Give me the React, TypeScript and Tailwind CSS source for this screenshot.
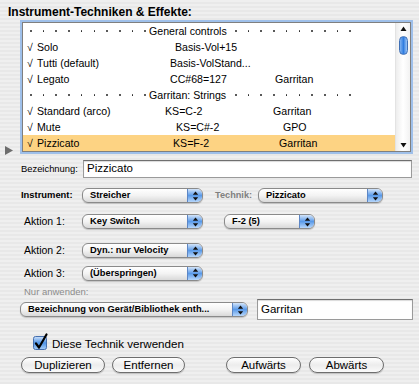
import React from "react";

type Row =
  | { kind: "sep"; label: string }
  | {
      kind: "item";
      name: string;
      action: string;
      actionPad: string;
      lib?: string;
      libPad?: string;
      selected?: boolean;
    };

const rows: Row[] = [
  { kind: "sep", label: "General controls" },
  { kind: "item", name: "Solo", action: "Basis-Vol+15", actionPad: "pl-[10px]" },
  { kind: "item", name: "Tutti (default)", action: "Basis-VolStand...", actionPad: "pl-[5px]" },
  { kind: "item", name: "Legato", action: "CC#68=127", actionPad: "pl-[5px]", lib: "Garritan", libPad: "pl-[2px]" },
  { kind: "sep", label: "Garritan: Strings" },
  { kind: "item", name: "Standard (arco)", action: "KS=C-2", actionPad: "pl-0", lib: "Garritan", libPad: "pl-0" },
  { kind: "item", name: "Mute", action: "KS=C#-2", actionPad: "pl-[11px]", lib: "GPO", libPad: "pl-[10px]" },
  {
    kind: "item",
    name: "Pizzicato",
    action: "KS=F-2",
    actionPad: "pl-[8px]",
    lib: "Garritan",
    libPad: "pl-[6px]",
    selected: true,
  },
];

const dots = Array.from({ length: 10 });

const Dots = ({ className }: { className: string }) => (
  <div className={`flex justify-between ${className}`}>
    {dots.map((_, i) => (
      <span key={i} className="h-[1.5px] w-[1.5px] rounded-full bg-[#222]" />
    ))}
  </div>
);

const ArrowsIcon = () => (
  <svg width="7" height="10" viewBox="0 0 7 10">
    <polygon points="3.5,0.5 6.2,3.8 0.8,3.8" fill="#111" />
    <polygon points="0.8,6.2 6.2,6.2 3.5,9.5" fill="#111" />
  </svg>
);

const Popup = ({ label, className }: { label: string; className: string }) => (
  <div
    className={`flex h-[15px] items-stretch overflow-hidden rounded-[6px] border border-[#8a8a8a] bg-linear-to-b from-white via-[#f3f3f3] to-[#d9d9d9] shadow-[0_1px_1px_rgba(0,0,0,0.18)] ${className}`}
  >
    <span className="flex-1 overflow-hidden whitespace-nowrap pl-[7px] text-[9.3px] font-bold leading-[13px] text-black">
      {label}
    </span>
    <span className="flex w-[15px] items-center justify-center border-l border-[#5d86c4] bg-linear-to-b from-[#d3e4f8] via-[#5a9ae8] to-[#b6d6fa]">
      <ArrowsIcon />
    </span>
  </div>
);

const Button = ({ label, className }: { label: string; className: string }) => (
  <button
    className={`flex h-[16px] items-center justify-center rounded-full border border-[#6e6e6e] bg-linear-to-b from-white via-[#ececec] to-[#fafafa] text-[11.5px] leading-none text-black shadow-[0_1px_1px_rgba(0,0,0,0.2)] ${className}`}
  >
    {label}
  </button>
);

const TextField = ({ value, className }: { value: string; className: string }) => (
  <div
    className={`flex items-center border border-[#9a9a9a] border-t-[#6f6f6f] bg-white pl-[3px] text-[11.5px] text-black shadow-[inset_0_1px_1px_rgba(0,0,0,0.15)] ${className}`}
  >
    {value}
  </div>
);

export default function App() {
  return (
    <div className="h-[384px] w-[419px] overflow-hidden bg-[repeating-linear-gradient(to_bottom,#efefef_0px,#efefef_2px,#e8e8e8_2px,#e8e8e8_4px)] font-['Liberation_Sans',Arial,sans-serif] text-black">
      <div className="pl-[8px] pt-[5px] text-[12px] font-bold leading-[14px]">
        Instrument-Techniken &amp; Effekte:
      </div>

      {/* list with disclosure triangle on the left */}
      <div className="mt-[3px] flex">
        <div className="flex w-[22px] items-end pl-[5px]">
          <svg width="8" height="9" viewBox="0 0 8 9" className="mb-[-3px]">
            <polygon points="0,0 8,4.5 0,9" fill="#6d6d6d" />
          </svg>
        </div>
        <div className="flex h-[130px] w-[389px] border border-[#7f7f7f] bg-white shadow-[0_0_0_2px_#9fc0ea]">
          <div className="flex-1 text-[10.6px] leading-[16px]">
            {rows.map((row, i) =>
              row.kind === "sep" ? (
                <div key={i} className="flex h-[16px] items-center">
                  <Dots className="ml-[7px] w-[116px]" />
                  <span className="ml-[3px] w-[83px]">{row.label}</span>
                  <Dots className="ml-[3px] w-[116px]" />
                </div>
              ) : (
                <div
                  key={i}
                  className={`grid h-[16px] grid-cols-[10px_128px_108px_1fr] pl-[4px] ${
                    row.selected ? "bg-[#fdd383]" : ""
                  }`}
                >
                  <span>√</span>
                  <span>{row.name}</span>
                  <span className={`whitespace-nowrap ${row.actionPad}`}>{row.action}</span>
                  <span className={row.libPad}>{row.lib}</span>
                </div>
              )
            )}
          </div>
          {/* scrollbar */}
          <div className="flex w-[15px] flex-col items-center border-l border-[#e3e3e3] bg-linear-to-r from-[#ededed] via-white to-[#f2f2f2]">
            <svg width="7" height="6" viewBox="0 0 7 6" className="mt-[3px]">
              <polygon points="3.5,0.5 6.5,5 0.5,5" fill="#111" />
            </svg>
            <div className="mt-[4px] h-[19px] w-[9px] rounded-full border border-[#3f6fb5] bg-linear-to-r from-[#7fb2f0] via-[#2f7de0] to-[#9cc6f6]" />
            <div className="flex-1" />
            <svg width="7" height="6" viewBox="0 0 7 6" className="mb-[3px]">
              <polygon points="0.5,1 6.5,1 3.5,5.5" fill="#111" />
            </svg>
          </div>
        </div>
      </div>

      {/* Bezeichnung */}
      <div className="mt-[8px] flex items-center pl-[21px]">
        <span className="w-[62px] text-[9.4px]">Bezeichnung:</span>
        <TextField value="Pizzicato" className="h-[18px] w-[329px]" />
      </div>

      {/* Instrument / Technik */}
      <div className="mt-[10px] flex items-center pl-[21px]">
        <span className="w-[61px] text-[9.4px] font-bold">Instrument:</span>
        <Popup label="Streicher" className="w-[121px]" />
        <span className="ml-[12px] w-[43px] text-[9.2px] font-bold text-[#808080]">Technik:</span>
        <Popup label="Pizzicato" className="w-[125px]" />
      </div>

      <div className="mt-[11px] flex items-center pl-[24px]">
        <span className="w-[58px] text-[10.5px]">Aktion 1:</span>
        <Popup label="Key Switch" className="w-[121px]" />
        <Popup label="F-2 (5)" className="ml-[21px] w-[91px]" />
      </div>

      <div className="mt-[13px] flex items-center pl-[24px]">
        <span className="w-[58px] text-[10.5px]">Aktion 2:</span>
        <Popup label="Dyn.: nur Velocity" className="w-[121px]" />
      </div>

      <div className="mt-[7px] flex items-center pl-[24px]">
        <span className="w-[58px] text-[10.5px]">Aktion 3:</span>
        <Popup label="(Überspringen)" className="w-[121px]" />
      </div>

      <div className="mt-[5px] pl-[24px] text-[9.5px] leading-[12px] text-[#8c8c8c]">Nur anwenden:</div>

      <div className="mt-[1px] flex items-center pl-[20px]">
        <Popup label="Bezeichnung von Gerät/Bibliothek enth..." className="w-[228px]" />
        <TextField value="Garritan" className="ml-[9px] h-[21px] w-[156px]" />
      </div>

      {/* checkbox */}
      <div className="mt-[16px] flex h-[14px] items-center pl-[33px]">
        <svg width="15" height="15" viewBox="0 0 15 15" className="overflow-visible">
          <defs>
            <linearGradient id="cb" x1="0" y1="0" x2="0" y2="1">
              <stop offset="0" stopColor="#cfe2fa" />
              <stop offset="0.5" stopColor="#4f93e6" />
              <stop offset="1" stopColor="#a9cff8" />
            </linearGradient>
          </defs>
          <rect x="0.5" y="0.5" width="13" height="13" rx="2" fill="url(#cb)" stroke="#466fae" />
          <path d="M3 7.5 L6 11.5 L13.5 -1.5" fill="none" stroke="#000" strokeWidth="2.2" strokeLinecap="round" strokeLinejoin="round" />
        </svg>
        <span className="ml-[4px] text-[11.6px]">Diese Technik verwenden</span>
      </div>

      {/* buttons */}
      <div className="mt-[7px] flex items-center pl-[21px]">
        <Button label="Duplizieren" className="w-[84px]" />
        <Button label="Entfernen" className="ml-[7px] w-[73px]" />
        <Button label="Aufwärts" className="ml-[41px] w-[75px]" />
        <Button label="Abwärts" className="ml-[8px] w-[75px]" />
      </div>
    </div>
  );
}
